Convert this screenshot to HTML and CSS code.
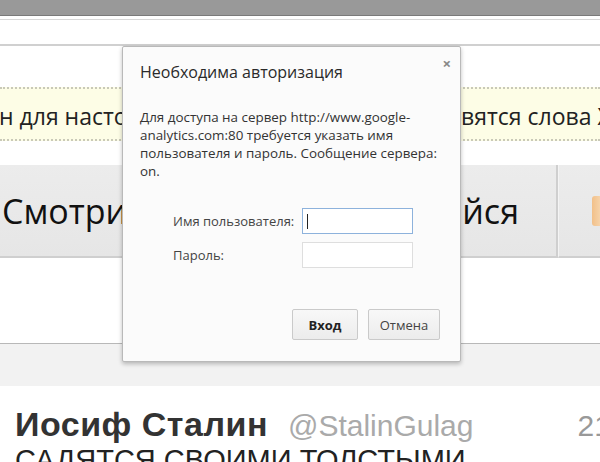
FILE: index.html
```html
<!DOCTYPE html>
<html lang="ru">
<head>
    <meta charset="UTF-8">
    <meta name="viewport" content="width=device-width, initial-scale=1.0">
    <title>Необходима авторизация</title>
    <link rel="stylesheet" href="styles.css">
</head>
<body>
    <div class="verh"></div>
    <div class="panel"></div>

    <div class="stranica">
        <div class="obyavlenie">
            <span class="obyavlenie-levo">н для настольной версии Твиттера появятся</span>
            <span class="obyavlenie-pravo">вятся слова Хэштеги</span>
        </div>

        <div class="vkladki">
            <div class="vkladka">
                <span>Смотри·</span>
                <span>наслаждайся</span>
            </div>
            <div class="vkladka vkladka-vtoraya">
                <span class="oranzh"></span>
            </div>
        </div>

        <div class="seraya-polosa"></div>

        <div class="tvit">
            <div class="tvit-shapka">
                <span class="imya">Иосиф Сталин</span>
                <span class="nik">@StalinGulag</span>
                <span class="data">21 янв</span>
            </div>
            <p class="tvit-tekst">САДЯТСЯ СВОИМИ ТОЛСТЫМИ</p>
        </div>
    </div>

    <div class="okno">
        <span class="zakryt">×</span>
        <h2>Необходима авторизация</h2>
        <p class="soobshenie">Для доступа на сервер http://www.google-analytics.com:80 требуется указать имя пользователя и пароль. Сообщение сервера: on.</p>

        <div class="forma">
            <label for="imya">Имя пользователя:</label>
            <div class="pole pole-aktivnoe" id="imya"><span class="kursor"></span></div>
            <label for="parol">Пароль:</label>
            <div class="pole" id="parol"></div>
        </div>

        <div class="knopki">
            <button class="vhod">Вход</button>
            <button class="otmena">Отмена</button>
        </div>
    </div>
</body>
</html>
```

FILE: styles.css
```css
body {
    margin: 0;
    background-color: #fff;
    font-family: "Open Sans", "Noto Sans", sans-serif;
    overflow: hidden;
    height: 462px;
    position: relative;
}

.verh {
    height: 15px;
    background-color: #999;
    border-bottom: 1px solid #7a7a7a;
}

.panel {
    height: 24px;
    margin-top: 3px;
    border-top: 1px solid #d8d8d8;
    border-bottom: 2px solid #d0d0d0;
    background-color: #fff;
}

.stranica {
    padding-top: 41px;
}

.obyavlenie {
    display: flex;
    height: 50px;
    align-items: center;
    background-color: #fdfde6;
    border-top: 2px dotted #c9c9b8;
    border-bottom: 2px dotted #c9c9b8;
    font-size: 23px;
    color: #222;
    white-space: nowrap;
    overflow: hidden;
}

.obyavlenie-levo {
    flex: 0 0 462px;
    overflow: hidden;
    margin-left: -1px;
    padding-top: 4px;
}

.obyavlenie-pravo {
    padding-top: 4px;
}

.vkladki {
    display: flex;
    margin-top: 24px;
    height: 93px;
}

.vkladka {
    display: flex;
    flex-shrink: 0;
    justify-content: space-between;
    align-items: center;
    width: 517px;
    padding: 0 37px 0 2px;
    background: linear-gradient(#ececec, #e6e6e6);
    border-right: 2px solid #cfcfcf;
    border-bottom: 2px solid #cfcfcf;
    font-size: 34px;
    color: #111;
    white-space: nowrap;
}

.vkladka-vtoraya {
    flex: 1;
    flex-shrink: 1;
    padding: 0;
    border-right: none;
    border-left: 1px solid #f4f4f4;
}

.oranzh {
    margin-left: 33px;
    width: 10px;
    height: 30px;
    background: linear-gradient(90deg, #f2c089, #f7d7b0);
    border-radius: 3px 0 0 3px;
}

.seraya-polosa {
    margin-top: 85px;
    height: 42px;
    background-color: #f2f2f2;
    border-top: 1px solid #b8b8b8;
}

.tvit {
    padding: 19px 0 0 15px;
    font-family: "Liberation Sans", Arial, sans-serif;
}

.tvit-shapka {
    display: flex;
    align-items: baseline;
    gap: 20px;
    white-space: nowrap;
    margin-right: -68px;
}

.imya {
    font-size: 34px;
    font-weight: bold;
    color: #333;
    letter-spacing: 0.5px;
}

.nik {
    font-size: 30px;
    color: #aaa;
}

.data {
    margin-left: auto;
    font-size: 30px;
    color: #999;
}

.tvit-tekst {
    margin: 0;
    font-size: 29px;
    color: #222;
    white-space: nowrap;
}

.okno {
    position: absolute;
    left: 122px;
    top: 46px;
    width: 300px;
    height: 299px;
    padding: 15px 20px 0 17px;
    background-color: #fbfbfb;
    border: 1px solid #b9b9b9;
    border-radius: 2px;
    box-shadow: 0 2px 4px rgba(0, 0, 0, 0.25);
    color: #333;
}

.zakryt {
    position: absolute;
    top: 6px;
    right: 9px;
    font-size: 15px;
    font-weight: bold;
    color: #888;
}

.okno h2 {
    margin: 0;
    font-size: 16px;
    font-weight: normal;
    line-height: 20px;
    color: #2a2a2a;
}

.soobshenie {
    margin: 26px 0 0;
    font-size: 13.4px;
    line-height: 18px;
    color: #333;
}

.forma {
    display: grid;
    grid-template-columns: 121px 111px;
    column-gap: 8px;
    row-gap: 8px;
    align-items: center;
    margin: 28px 0 0 33px;
    font-size: 13px;
    color: #444;
}

.forma label {
    white-space: nowrap;
}

.pole {
    height: 24px;
    border: 1px solid #dedede;
    background-color: #fff;
    position: relative;
}

.pole-aktivnoe {
    border-color: #8db2dc;
}

.kursor {
    position: absolute;
    left: 4px;
    top: 5px;
    width: 1px;
    height: 15px;
    background-color: #222;
}

.knopki {
    display: flex;
    justify-content: flex-end;
    gap: 10px;
    margin-top: 41px;
}

button {
    height: 31px;
    padding: 0;
    font-family: inherit;
    font-size: 13px;
    color: #444;
    background: linear-gradient(#f8f8f8, #ececec);
    border: 1px solid #cacaca;
    border-radius: 2px;
}

.vhod {
    width: 66px;
    font-weight: bold;
    color: #222;
}

.otmena {
    width: 72px;
}
```
